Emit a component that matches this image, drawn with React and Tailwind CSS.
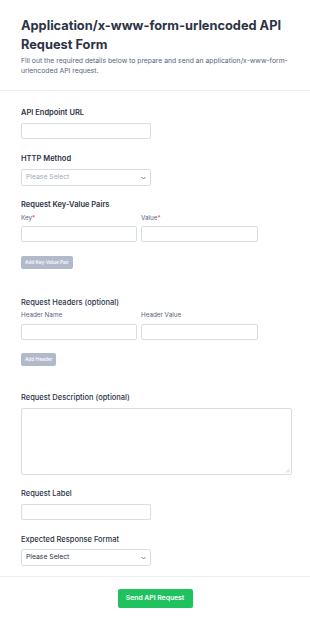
import React from "react";

const Label = ({ children, className = "" }) => (
    <div className={`text-[7.5px] leading-[10px] text-[#2c3345] ${className}`}>{children}</div>
);

const Input = ({ className = "w-[130px]" }) => (
    <div className={`h-[16px] rounded-[2px] border border-[#d8dce5] bg-white ${className}`} />
);

const Select = ({ muted }) => (
    <div className="flex h-[17px] w-[130px] items-center justify-between rounded-[2px] border border-[#d8dce5] bg-white px-[4px]">
        <span className={`text-[6.8px] ${muted ? "text-[#a2abbd]" : "text-[#2c3345]"}`}>Please Select</span>
        <svg width="5" height="4" viewBox="0 0 10 6" fill="none" stroke="#57647e" strokeWidth="1.6">
            <path d="M1 1l4 4 4-4" />
        </svg>
    </div>
);

const SmallButton = ({ text, className = "" }) => (
    <div className={`flex ${className}`}>
        <div className="flex h-[13px] items-center rounded-[2px] bg-[#b1bacb] px-[4px] text-[4.8px] font-medium text-white">
            {text}
        </div>
    </div>
);

const SubLabel = ({ children }) => (
    <div className="text-[6.3px] leading-[8px] text-[#57647e]">{children}</div>
);

export default function App() {
    return (
        <div className="min-h-[625px] w-[310px] bg-white" style={{ fontFamily: "Inter, 'Noto Sans', sans-serif" }}>
            <div className="px-[21px] pt-[16px] pb-[14px]">
                <h1 className="text-[12.8px] font-bold leading-[19px] text-[#2c3345]">
                    Application/x-www-form-urlencoded API Request Form
                </h1>
                <p className="mt-[2px] text-[6.8px] leading-[10px] text-[#57647e]">
                    Fill out the required details below to prepare and send an application/x-www-form-urlencoded API request.
                </p>
            </div>
            <div className="border-t border-[#eceef3]" />

            <div className="px-[21px] pt-[17px]">
                <Label className="font-semibold">API Endpoint URL</Label>
                <div className="mt-[5px]"><Input /></div>

                <Label className="mt-[15px] font-semibold">HTTP Method</Label>
                <div className="mt-[5px]"><Select muted /></div>

                <Label className="mt-[14px] font-semibold">Request Key-Value Pairs</Label>
                <div className="mt-[4px] flex gap-[4px]">
                    <div>
                        <SubLabel>Key<span className="text-[#f23a3c]">*</span></SubLabel>
                        <div className="mt-[4px]"><Input className="w-[116px]" /></div>
                    </div>
                    <div>
                        <SubLabel>Value<span className="text-[#f23a3c]">*</span></SubLabel>
                        <div className="mt-[4px]"><Input className="w-[117px]" /></div>
                    </div>
                </div>
                <SmallButton className="mt-[14px]" text="Add Key-Value Pair" />

                <Label className="mt-[29px] font-medium">Request Headers (optional)</Label>
                <div className="mt-[3px] flex gap-[4px]">
                    <div>
                        <SubLabel>Header Name</SubLabel>
                        <div className="mt-[5px]"><Input className="w-[116px]" /></div>
                    </div>
                    <div>
                        <SubLabel>Header Value</SubLabel>
                        <div className="mt-[5px]"><Input className="w-[117px]" /></div>
                    </div>
                </div>
                <SmallButton className="mt-[13px]" text="Add Header" />

                <Label className="mt-[27px] font-medium">Request Description (optional)</Label>
                <div className="relative mt-[5px] h-[67px] w-[271px] rounded-[2px] border border-[#d8dce5] bg-white">
                    <svg className="absolute right-[1px] bottom-[1px]" width="5" height="5" viewBox="0 0 6 6" stroke="#b8bec9" strokeWidth="0.8">
                        <path d="M5.5 1L1 5.5M5.5 3.5L3.5 5.5" />
                    </svg>
                </div>

                <Label className="mt-[14px] font-medium">Request Label</Label>
                <div className="mt-[5px]"><Input /></div>

                <Label className="mt-[15px] font-medium">Expected Response Format</Label>
                <div className="mt-[4px]"><Select /></div>
            </div>

            <div className="mt-[10px] border-t border-[#eceef3]" />
            <div className="flex justify-center pt-[12px]">
                <div className="flex h-[19px] w-[75px] items-center justify-center rounded-[2px] bg-[#1fc25f] text-[6.8px] font-semibold text-white">
                    Send API Request
                </div>
            </div>
        </div>
    );
}
